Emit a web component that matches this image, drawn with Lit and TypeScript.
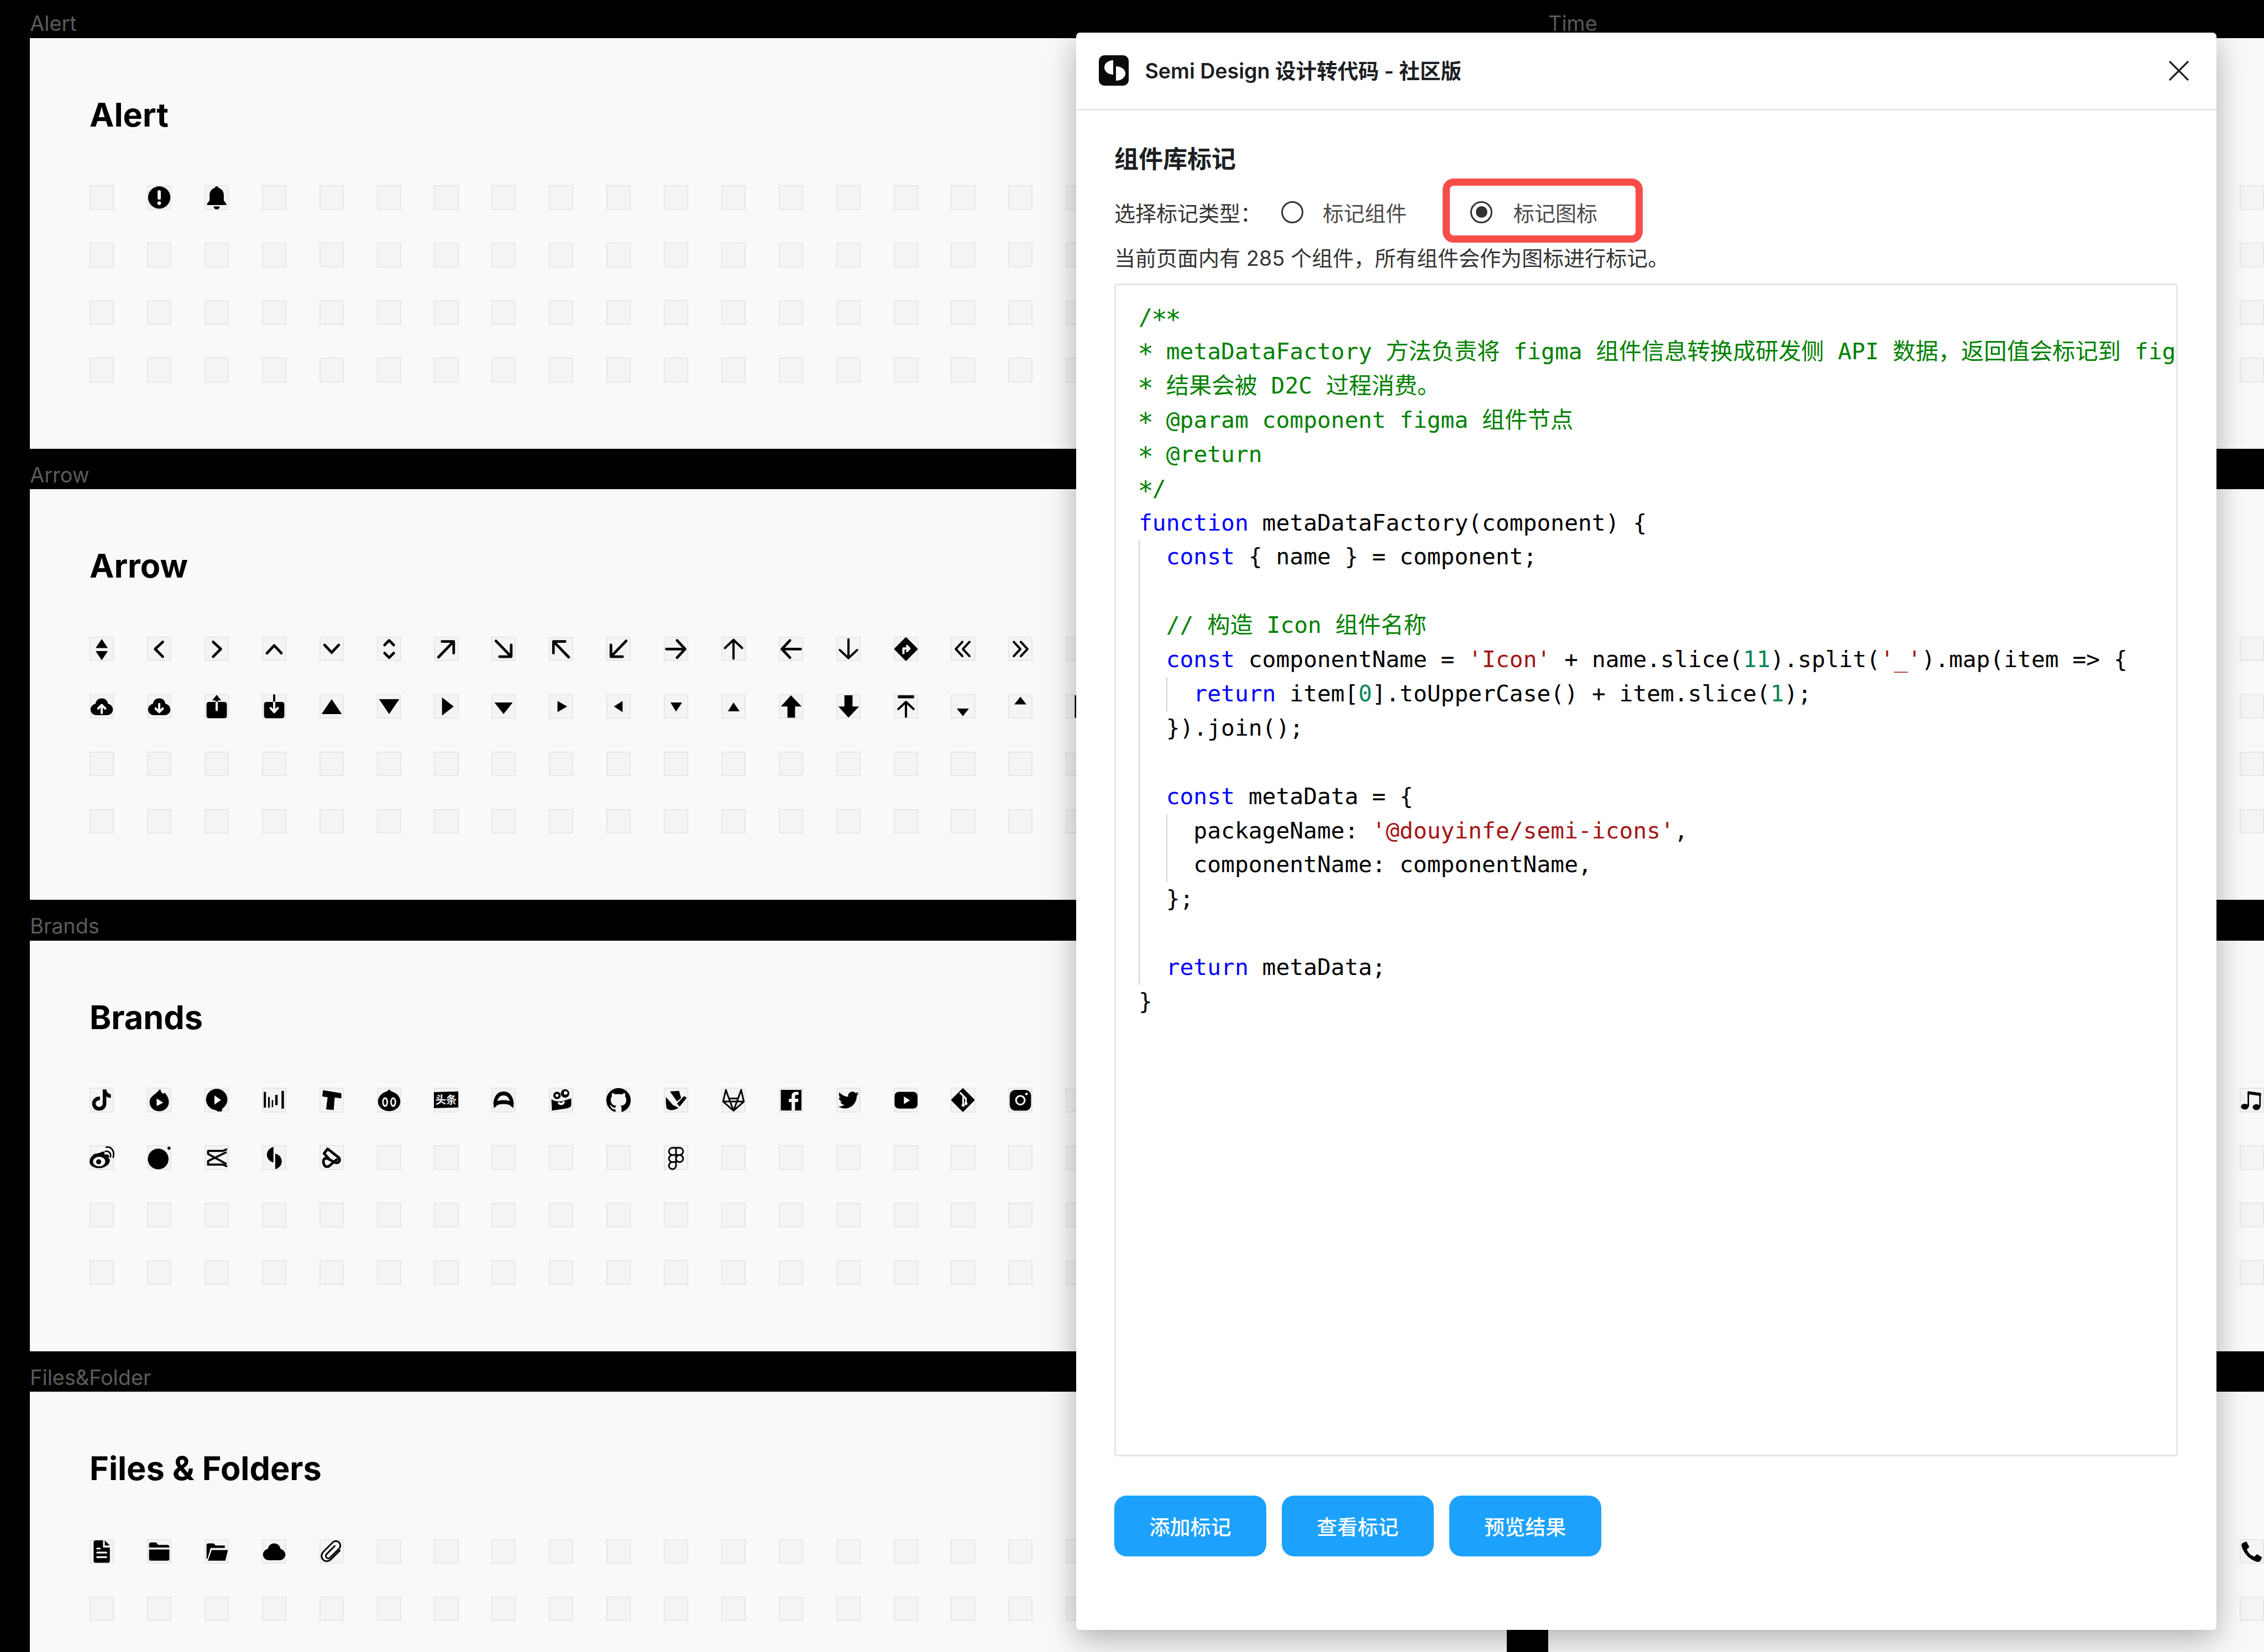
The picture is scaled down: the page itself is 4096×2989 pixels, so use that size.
import { LitElement, html, css, svg } from "lit";
import { customElement } from "lit/decorators.js";

const CLOUD = "M12 4C8.7 4 6.2 6.3 5.8 9.4 3 9.9 1 12.3 1 15c0 3.2 2.6 5.5 5.5 5.5h11c2.9 0 5.5-2.3 5.5-5.5 0-2.7-2-5.1-4.8-5.6C17.8 6.3 15.3 4 12 4Z";
const s = (d: string, c = "l") => svg`<path class=${c} d=${d}></path>`;

const ICONS: Record<string, unknown> = {
  alert: svg`<circle cx="12" cy="12" r="11"></circle><rect class="w" x="10.4" y="4.8" width="3.2" height="9.4" rx="1.6"></rect><circle class="w" cx="12" cy="17.6" r="1.8"></circle>`,
  bell: svg`<path d="M12 1c-.9 0-1.6.7-1.7 1.5C7 3.4 5 6.3 5 9.5V15l-2.5 3.2c-.4.6 0 1.3.7 1.3h17.6c.7 0 1.1-.7.7-1.3L19 15V9.5c0-3.2-2-6.1-5.3-7C13.6 1.7 12.9 1 12 1Z"></path><path d="M9 20.8h6a3 3 0 0 1-6 0Z"></path>`,
  sort: s("M12 2 18 11H6ZM6 14H18L12 23Z", ""),
  cl: s("M15.5 5 8 12l7.5 7.5"),
  cr: s("M8.5 5 16 12l-7.5 7.5"),
  cu: s("M5 16l7-7.5 7 7.5"),
  cd: s("M5 8l7 7.5L19 8"),
  ud: s("M7.5 8 12 3.5 16.5 8M7.5 16l4.5 4.5 4.5-4.5"),
  aur: s("M8 4.5h11.5V16M19 5 4.5 20"),
  adr: s("M4.5 4 19 19M19.5 8v11.5H8"),
  aul: s("M4.5 16V4.5H16M5 5l14.5 15"),
  adl: s("M19.5 4 5 19M4.5 8v11.5H16"),
  ar: s("M2.5 12H21M13 3.5 21 12l-8 8.5"),
  au: svg`<path class="t" d="M12 21.5V3M3.5 11 12 3l8.5 8"></path>`,
  al: s("M21.5 12H3M11 3.5 3 12l8 8.5"),
  ad: svg`<path class="t" d="M12 2.5V21M3.5 13l8.5 8 8.5-8"></path>`,
  route: svg`<path class="r" d="M12 1.5 22.5 12 12 22.5 1.5 12Z"></path><path class="wl" d="M9.5 16v-4.5H15M13 9l2.5 2.5L13 14"></path>`,
  dl: s("M11.5 5 5 12l6.5 7M18.5 5 12 12l6.5 7", "t"),
  dr: s("M5.5 5 12 12l-6.5 7M12.5 5 19 12l-6.5 7", "t"),
  cup: svg`<path d=${CLOUD}></path><path class="wl" d="M12 18.5V11M8.5 14 12 10.5l3.5 3.5"></path>`,
  cdown: svg`<path d=${CLOUD}></path><path class="wl" d="M12 9.5V17M8.5 14l3.5 3.5 3.5-3.5"></path>`,
  bup: svg`<rect x="2" y="7.5" width="20" height="16" rx="2.4"></rect><path d="M12 .5 16.5 6h-3.3v2h-2.4V6H7.5Z"></path><path class="wl" d="M12 15.5V8"></path>`,
  bdown: svg`<rect x="2" y="7.5" width="20" height="16" rx="2.4"></rect><path class="t" d="M12 1v7"></path><path class="wl" d="M12 8v9M8.5 13.5l3.5 4 3.5-4"></path>`,
  t1: s("M12 4.7 22 19.5H2Z", ""),
  t2: s("M2 4.7H22L12 19.5Z", ""),
  t3: s("M8 3 19.5 12 8 21Z", ""),
  t4: s("M3 8H21L12 19.5Z", ""),
  t5: s("M8.5 6.5 18 12 8.5 17.5Z", ""),
  t6: s("M16 6.5 7.5 12 16 17.5Z", ""),
  t7: s("M6.5 8H18L12 17Z", ""),
  t8: s("M12 8 18 16.7H6.5Z", ""),
  fu: s("M12 1 22.5 12H16V23H8.5V12H2Z", ""),
  fd: s("M8 1H16V12H22.5L12 23 2 12H8Z", ""),
  top: svg`<rect x="4" y="1" width="16" height="3" rx=".8"></rect><path class="t" d="M12 22V7.5M4.5 14.5l7.5-7 7.5 7"></path>`,
  t9: s("M6 14H18L12 21.5Z", ""),
  t10: s("M12 2.3 18 10H6Z", ""),
  bar: svg`<rect x="8.9" y="1" width="8" height="22"></rect>`,
  tiktok: s("M13 1.5h3.5c.3 2.6 1.9 4.4 4.5 4.8v3.6c-1.7 0-3.2-.5-4.5-1.4v7c0 4-3 7-7 7s-7-3-7-7c0-3.9 3.2-7.2 7.8-6.9v3.7c-2.3-.4-4.2 1.1-4.2 3.2 0 1.8 1.5 3.3 3.4 3.3s3.5-1.5 3.5-3.6Z", ""),
  flame: svg`<path d="M13 1c.5 3 1.5 4 3 5 .5-.5.8-1 1-1.500 3 3 4.500 6 4.500 9.500 0 5-4 9-9.500 9s-9.500-4-9.500-9c0-5 4.500-7 6.500-9C10.500 3.700 12 2.500 13 1Z"></path><path class="w" d="M9.500 10.500 16 14.500 9.500 18Z"></path>`,
  xigua: svg`<circle cx="12" cy="11.500" r="10.500"></circle><path d="M6 18 13 23.300h4L18 18Z"></path><path class="w" d="M9.800 7.500 16.300 12 9.800 16.500Z"></path>`,
  bars: svg`<rect x="1.700" y="4" width="2.200" height="15.500"></rect><rect x="6" y="9" width="1.700" height="10.500"></rect><rect x="9.600" y="12" width="1.400" height="7"></rect><rect x="13" y="7" width="2.400" height="10"></rect><rect x="19.200" y="3" width="2.400" height="17.500"></rect>`,
  tt: s("M3.500 2.300 21.500 5.300v5l-6.500-.8-1 12.300-7.500-.6 1.500-12L2.700 8.500Z", ""),
  eyes: svg`<path d="M12 1.500c.8 1 2 1.900 3.500 2.500C19.800 5.500 23 9 23 13.500c0 5.500-5 9.500-11 9.500S1 19 1 13.500C1 9 4.200 5.500 8.500 4 10 3.400 11.200 2.500 12 1.500Z"></path><ellipse class="w" cx="8" cy="14" rx="2.900" ry="4.800"></ellipse><ellipse class="w" cx="16" cy="14" rx="2.900" ry="4.800"></ellipse><ellipse cx="8" cy="14" rx="1.400" ry="3"></ellipse><ellipse cx="16" cy="14" rx="1.400" ry="3"></ellipse>`,
  toutiao: svg`<path d="M0 4.200 24 3.500V19.300L0 20Z"></path><text class="tx" x="12" y="15.800" text-anchor="middle">头条</text>`,
  arc: svg`<path d="M12 3.500C6 3.500 2.500 8.500 2 15l.5 5L6 17c2.500-1.500 9.500-1.500 12 0l3.500 3 .5-5c-.5-6.500-4-11.500-10-11.500Z"></path><path class="w" d="M12 7.500c-3.500 0-5.500 2.500-6 5.500 3-1.200 9-1.200 12 0-.5-3-2.500-5.500-6-5.500Z"></path>`,
  camera: svg`<path d="M2.500 11C5 13 9 14 13 13c3-.5 7-2 9-2.500V17c0 2-3 3-6 3.500L3 22.500Z"></path><circle cx="8" cy="7.500" r="3.700"></circle><circle cx="16" cy="5.500" r="4.200"></circle><circle class="w" cx="8" cy="7.500" r="1.500"></circle><circle class="w" cx="16.500" cy="5" r="1.800"></circle><path class="wl" d="M10 15c1.500 1.500 4 1 4.500-1"></path>`,
  github: s("M12 .297c-6.63 0-12 5.373-12 12 0 5.303 3.438 9.8 8.205 11.385.6.113.82-.258.82-.577 0-.285-.01-1.04-.015-2.04-3.338.724-4.042-1.61-4.042-1.61C4.422 18.070 3.633 17.700 3.633 17.700c-1.087-.744.084-.729.084-.729 1.205.084 1.838 1.236 1.838 1.236 1.070 1.835 2.809 1.305 3.495.998.108-.776.417-1.305.76-1.605-2.665-.3-5.466-1.332-5.466-5.930 0-1.310.465-2.380 1.235-3.220-.135-.303-.54-1.523.105-3.176 0 0 1.005-.322 3.300 1.230.96-.267 1.980-.399 3-.405 1.020.006 2.040.138 3 .405 2.280-1.552 3.285-1.230 3.285-1.230.645 1.653.24 2.873.12 3.176.765.84 1.230 1.910 1.230 3.220 0 4.610-2.805 5.625-5.475 5.920.42.36.81 1.096.81 2.220 0 1.606-.015 2.896-.015 3.286 0 .315.21.69.825.57C20.565 22.092 24 17.592 24 12.297c0-6.627-5.373-12-12-12", ""),
  dove: svg`<path d="M6 3.500 15 3l2 7-4 3.500Z"></path><path d="M20 8l2.500 2L15.500 18.500 13 15.500Z"></path><path d="M2 9l7 8 5.500 2.500C11 22.500 6 22.500 3 20.500 2 18 2 12 2 9Z"></path>`,
  gitlab: s("M12 22.500 1.800 13.500 4.500 2l3 8.500h9l3-8.500 2.700 11.500ZM7.500 10.500 12 22.500l4.500-12M1.800 13.500H22.200", "n"),
  fb: svg`<rect x="2" y="2" width="20.300" height="20.300"></rect><path class="w" d="M16 22.300V14h2.800l.5-3.300H16V8.600c0-1 .3-1.600 1.600-1.600h1.800V4c-.4 0-1.400-.1-2.600-.1-2.500 0-4.200 1.500-4.200 4.300v2.500H9.800V14h2.800v8.300Z"></path>`,
  tw: svg`<g transform="translate(1.800 1.800) scale(.85)"><path d="M23.953 4.570a10 10 0 0 1-2.825.775 4.958 4.958 0 0 0 2.163-2.723c-.951.555-2.005.959-3.127 1.184a4.920 4.920 0 0 0-8.384 4.482C7.690 8.095 4.067 6.130 1.640 3.162a4.822 4.822 0 0 0-.666 2.475c0 1.710.87 3.213 2.188 4.096a4.904 4.904 0 0 1-2.228-.616v.06a4.923 4.923 0 0 0 3.946 4.827 4.996 4.996 0 0 1-2.212.085 4.936 4.936 0 0 0 4.604 3.417 9.867 9.867 0 0 1-6.102 2.105c-.39 0-.779-.023-1.170-.067a13.995 13.995 0 0 0 7.557 2.209c9.053 0 13.998-7.496 13.998-13.985 0-.21 0-.42-.015-.63A9.935 9.935 0 0 0 24 4.590z"></path></g>`,
  yt: svg`<rect x=".8" y="4" width="22.600" height="16.400" rx="4"></rect><path class="w" d="M10 8.500 16 12.200 10 16Z"></path>`,
  git: svg`<path class="r" d="M12 1.500 22.500 12 12 22.500 1.500 12Z"></path><path class="wl1" d="M9.500 5l5.500 5.500V16M12.300 8v9.500"></path><circle class="w" cx="12.300" cy="17.200" r="1.500"></circle><circle class="w" cx="15" cy="15.500" r="1.500"></circle>`,
  ig: svg`<rect x="1.500" y="2" width="21" height="20.500" rx="5.500"></rect><circle class="wl1" cx="12" cy="12.200" r="4.300"></circle><circle class="w" cx="18" cy="6" r="1.300"></circle>`,
  weibo: svg`<path d="M10 7.500c2-1.500 3.800-1.800 4.500-1 .5.600.3 1.700-.2 2.800 2.300-.8 4.200-.5 4.700.8.300.8 0 1.700-.5 2.400 1 .5 1.500 1.200 1.500 2.500 0 3.500-4.500 7.500-10.500 7.500C4.500 22.500 0 20 0 16c0-2.500 2-5.500 5-7.500Z"></path><ellipse class="w" cx="9.500" cy="16" rx="6" ry="4.700"></ellipse><circle cx="9" cy="16.200" r="2.500"></circle><path class="l1" d="M15.500 6c3.500-1 6 2 5 5.500M16.500 1.800c5-.8 8.500 4 6.800 10"></path>`,
  orb: svg`<circle cx="11" cy="13.500" r="10.200"></circle><circle cx="21.600" cy="2.800" r="1.500"></circle>`,
  capcut: s("M3.500 5.500H18l3.500-1.500M3.500 5.500v3L21 18M21 7 3.500 15.500V19H18l3.500 1.500", "l2"),
  semi: svg`<path d="M11.300 1.500A8.600 8 0 0 0 11.300 17Z"></path><path d="M13 8A8.600 8 0 0 1 13 23.500Z"></path>`,
  loop: s("M8 3.500 19 12c2 3 0 6-3.500 5L8 13c-4-1-5 2-3.500 6 1 2.500 4 2.500 5.500 1l7-6M8 3.500 4.500 8l4.500 5", "l"),
  figma: s("M12 2.500H8.500a3.500 3.500 0 0 0 0 7H12ZM12 2.500h3.500a3.500 3.500 0 0 1 0 7H12ZM12 9.500H8.500a3.500 3.500 0 0 0 0 7H12ZM19 13a3.500 3.500 0 1 1-7 0 3.500 3.500 0 1 1 7 0ZM12 16.500H8.500A3.500 3.500 0 1 0 12 20Z", "n"),
  music: svg`<path class="l1" d="M8.500 18V4.500L20 6v12"></path><path d="M8 3.200 21 5v3L8 6.200Z"></path><ellipse cx="5" cy="18.500" rx="3.700" ry="2.900"></ellipse><ellipse cx="16.500" cy="19" rx="3.700" ry="2.900"></ellipse>`,
  phone: s("M6.600 2 3 3.500C2 4 1.500 5.500 2 7c2 7 8 13 15 15 1.500.5 3 0 3.500-1l1.500-3.500-5-3-2.500 2.500C11 16 8.500 13.500 7 10l2.500-2.500Z", ""),
  doc: svg`<path d="M4 3a2 2 0 0 1 2-2h7.300v7H20v13a2 2 0 0 1-2 2H6a2 2 0 0 1-2-2Z"></path><path d="M15 1l5 5h-5Z"></path><path class="wl1" d="M7.500 9H10M7.500 13H16.500M7.500 17.500H16.500"></path>`,
  folder: svg`<path d="M2 5a2 2 0 0 1 2-2h5l2 2.500h9a2 2 0 0 1 2 2V8H2Z"></path><path d="M2 10h20v9a2 2 0 0 1-2 2H4a2 2 0 0 1-2-2Z"></path>`,
  open: svg`<path d="M2 6a2 2 0 0 1 2-2h5l2 2h9v2.500H6L3 19H2Z"></path><path d="M7 10.500h16L20.500 21h-17Z"></path>`,
  cloud: s(CLOUD, ""),
  clip: s("M20 11l-8.500 8.500C9 22 5.500 22 3.500 20s-2-5.500.5-8l9-9c1.800-1.800 4.500-1.800 6.300 0 1.700 1.800 1.700 4.500 0 6.200L10.500 18c-1 1-2.500 1-3.500 0s-1-2.500 0-3.500l8-8", "n"),
};

type Rows = Record<number, string>;
interface Section { label?: string; title?: string; icons?: Rows; }

const ARROW: Rows = {
  0: "sort", 1: "cl", 2: "cr", 3: "cu", 4: "cd", 5: "ud", 6: "aur", 7: "adr", 8: "aul", 9: "adl", 10: "ar", 11: "au", 12: "al", 13: "ad", 14: "route", 15: "dl", 16: "dr",
  24: "cup", 25: "cdown", 26: "bup", 27: "bdown", 28: "t1", 29: "t2", 30: "t3", 31: "t4", 32: "t5", 33: "t6", 34: "t7", 35: "t8", 36: "fu", 37: "fd", 38: "top", 39: "t9", 40: "t10", 41: "bar",
};
const BRANDS: Rows = {
  0: "tiktok", 1: "flame", 2: "xigua", 3: "bars", 4: "tt", 5: "eyes", 6: "toutiao", 7: "arc", 8: "camera", 9: "github", 10: "dove", 11: "gitlab", 12: "fb", 13: "tw", 14: "yt", 15: "git", 16: "ig",
  24: "weibo", 25: "orb", 26: "capcut", 27: "semi", 28: "loop", 34: "figma",
};

const LEFT: Section[] = [
  { label: "Alert", title: "Alert", icons: { 1: "alert", 2: "bell" } },
  { label: "Arrow", title: "Arrow", icons: ARROW },
  { label: "Brands", title: "Brands", icons: BRANDS },
  { label: "Files&Folder", title: "Files & Folders", icons: { 0: "doc", 1: "folder", 2: "open", 3: "cloud", 4: "clip" } },
];
const RIGHT: Section[] = [
  { label: "Time" },
  {},
  { icons: { 11: "music" } },
  { icons: { 11: "phone" } },
];

type Tok = [string, string];
const c = (t: string): Tok => ["cm", t];
const a = (): Tok => ["cm ast", "*"];
const k = (t: string): Tok => ["kw", t];
const p = (t: string): Tok => ["", t];
const q = (t: string): Tok => ["st", t];
const n = (t: string): Tok => ["nu", t];

const CODE: [number, Tok[]][] = [
  [0, [c("/"), a(), a()]],
  [0, [a(), c(" metaDataFactory 方法负责将 figma 组件信息转换成研发侧 API 数据，返回值会标记到 fig")]],
  [0, [a(), c(" 结果会被 D2C 过程消费。")]],
  [0, [a(), c(" @param component figma 组件节点")]],
  [0, [a(), c(" @return")]],
  [0, [a(), c("/")]],
  [0, [k("function"), p(" metaDataFactory(component) {")]],
  [1, [k("const"), p(" { name } = component;")]],
  [1, []],
  [1, [c("// 构造 Icon 组件名称")]],
  [1, [k("const"), p(" componentName = "), q("'Icon'"), p(" + name.slice("), n("11"), p(").split("), q("'_'"), p(").map(item => {")]],
  [2, [k("return"), p(" item["), n("0"), p("].toUpperCase() + item.slice("), n("1"), p(");")]],
  [1, [p("}).join();")]],
  [1, []],
  [1, [k("const"), p(" metaData = {")]],
  [2, [p("packageName: "), q("'@douyinfe/semi-icons'"), p(",")]],
  [2, [p("componentName: componentName,")]],
  [1, [p("};")]],
  [1, []],
  [1, [k("return"), p(" metaData;")]],
  [0, [p("}")]],
];

@customElement("app-root")
export class AppRoot extends LitElement {
  static styles = css`
    :host {
      display: block;
      position: relative;
      width: 4096px;
      height: 2989px;
      overflow: hidden;
      background: #000;
      font-family: Inter, "Noto Sans CJK SC", sans-serif;
    }
    .page {
      display: flex;
      gap: 74.800px;
      padding-left: 54.200px;
      margin-top: -4.700px;
    }
    .col {
      flex: 0 0 2672px;
      display: flex;
      flex-direction: column;
    }
    .label {
      height: 73.500px;
      box-sizing: border-box;
      padding-top: 25px;
      font-size: 37.800px;
      line-height: 44px;
      color: #5c5c5c;
      white-space: nowrap;
    }
    .panel {
      height: 743px;
      box-sizing: border-box;
      background: #f8f9fb;
      padding: 98px 0 0 107.900px;
    }
    .title {
      height: 80px;
      font-size: 59.400px;
      line-height: 80px;
      font-weight: 700;
      color: #000;
      margin: 0 0 88.400px;
    }
    .grid {
      display: grid;
      grid-template-columns: repeat(24, 44.100px);
      grid-auto-rows: 44.600px;
      column-gap: 59.800px;
      row-gap: 59.400px;
    }
    .cell {
      box-sizing: border-box;
      background: #f4f4f6;
      border: 2px solid #e6e7ea;
      position: relative;
    }
    .cell svg {
      position: absolute;
      left: -2px;
      top: -2px;
      width: 44.100px;
      height: 44.600px;
      display: block;
      overflow: visible;
    }
    .cell svg path, .cell svg circle, .cell svg rect, .cell svg ellipse { fill: #000; }
    .cell svg .w { fill: #f6f6f7; }
    .cell svg .l, .cell svg .t, .cell svg .n, .cell svg .l1, .cell svg .l2 {
      fill: none; stroke: #000; stroke-linecap: round; stroke-linejoin: round;
    }
    .cell svg .l { stroke-width: 2.600; }
    .cell svg .t { stroke-width: 2.200; }
    .cell svg .n { stroke-width: 1.600; }
    .cell svg .l1 { stroke-width: 1.500; }
    .cell svg .l2 { stroke-width: 2; }
    .cell svg .r { stroke: #000; stroke-width: 2; stroke-linejoin: round; }
    .cell svg .wl, .cell svg .wl1 {
      fill: none; stroke: #f6f6f7; stroke-linecap: round; stroke-linejoin: round;
    }
    .cell svg .wl { stroke-width: 2.200; }
    .cell svg .wl1 { stroke-width: 1.700; }
    .tx {
      fill: #f6f6f7;
      font-family: "Noto Sans CJK SC", sans-serif;
      font-size: 10.500px;
      font-weight: 700;
    }

    .modal {
      position: absolute;
      left: 1947.400px;
      top: 58.500px;
      width: 2062.600px;
      height: 2890.500px;
      background: #fff;
      border-radius: 7px;
      box-shadow: 0 16px 55px rgba(0, 0, 0, 0.3);
      display: flex;
      flex-direction: column;
    }
    .head {
      flex: 0 0 141px;
      box-sizing: border-box;
      display: flex;
      align-items: center;
      padding: 0 49px 0 41px;
      border-bottom: 3px solid #e6e6e6;
    }
    .logo { width: 54px; height: 55px; display: block; margin-right: 29px; }
    .mtitle {
      flex: 1;
      font-size: 37.600px;
      font-weight: 600;
      color: #1c1f23;
      white-space: nowrap;
      padding-bottom: 5px;
    }
    .close { width: 38px; height: 38px; display: block; }
    .body {
      flex: 1;
      display: flex;
      flex-direction: column;
      padding: 58px 70px 0 68.600px;
    }
    .h {
      margin: 0;
      font-size: 44px;
      line-height: 60px;
      font-weight: 600;
      color: #1c1f23;
    }
    .row {
      display: flex;
      align-items: center;
      height: 60px;
      margin-top: 36.300px;
      font-size: 38px;
      color: #333;
      white-space: nowrap;
    }
    .radio {
      box-sizing: border-box;
      width: 40px;
      height: 40px;
      border: 3px solid #333;
      border-radius: 50%;
      margin: 0 35px 0 36px;
      display: flex;
      align-items: center;
      justify-content: center;
      flex: none;
    }
    .radio + span { color: #4c4c4c; width: 150px; }
    .radio.second { margin: 0 38px 0 117px; }
    .dot { width: 21px; height: 21px; border-radius: 50%; background: #333; }
    .mark {
      position: absolute;
      left: 663px;
      top: 264.800px;
      width: 361.200px;
      height: 116px;
      box-sizing: border-box;
      border: 13px solid #f64d4b;
      border-radius: 20px;
    }
    .desc {
      font-size: 38px;
      line-height: 60px;
      height: 60px;
      margin-top: 23.400px;
      color: #333;
      white-space: nowrap;
    }
    .editor {
      box-sizing: border-box;
      margin-top: 16px;
      height: 2122px;
      border: 3px solid #e6e6e6;
      border-radius: 5px;
      padding: 28px 0 0 41px;
      overflow: hidden;
      font-family: "DejaVu Sans Mono", "Noto Sans CJK SC", monospace;
      font-size: 41.270px;
      color: #000;
    }
    .line {
      display: flex;
      height: 61.900px;
      line-height: 61.900px;
      white-space: pre;
    }
    .ind {
      flex: 0 0 2ch;
      box-sizing: border-box;
      border-left: 2px solid #d3d3d3;
    }
    .cm { color: #008000; }
    .kw { color: #0000ff; }
    .st { color: #a31515; }
    .nu { color: #098658; }
    .ast { display: inline-block; transform: translateY(5px) scale(1.15); }
    .btns {
      display: flex;
      gap: 27.600px;
      margin-top: 70.600px;
    }
    .btn {
      width: 275.200px;
      height: 110px;
      border: 0;
      padding: 0;
      border-radius: 22px;
      background: #1ca2fd;
      color: #fff;
      font: 500 37px Inter, "Noto Sans CJK SC", sans-serif;
    }
  `;

  private cell(name?: string) {
    return html`<div class="cell">${name ? html`<svg viewBox="0 0 24 24">${ICONS[name]}</svg>` : ""}</div>`;
  }

  private section(sec: Section) {
    const cells = [];
    for (let i = 0; i < 96; i++) cells.push(this.cell(sec.icons?.[i]));
    return html`
      <div class="label">${sec.label ?? ""}</div>
      <section class="panel">
        <h3 class="title">${sec.title ?? ""}</h3>
        <div class="grid">${cells}</div>
      </section>
    `;
  }

  render() {
    return html`
      <div class="page">
        <div class="col">${LEFT.map((x) => this.section(x))}</div>
        <div class="col">${RIGHT.map((x) => this.section(x))}</div>
      </div>
      <div class="modal">
        <header class="head">
          <svg class="logo" viewBox="0 0 54 55">
            <rect width="54" height="55" rx="10" fill="#0b0b0b"></rect>
            <path d="M26 9A16 13 0 0 0 26 35Z" fill="#fff"></path>
            <path d="M31 20A17 13 0 0 1 31 46Z" fill="#fff"></path>
          </svg>
          <div class="mtitle">Semi Design 设计转代码 - 社区版</div>
          <svg class="close" viewBox="0 0 38 38">
            <path d="M2 2 36 36M36 2 2 36" stroke="#222" stroke-width="3.200" fill="none"></path>
          </svg>
        </header>
        <div class="body">
          <h2 class="h">组件库标记</h2>
          <div class="row">
            <span>选择标记类型：</span>
            <i class="radio"></i><span>标记组件</span>
            <i class="radio second"><b class="dot"></b></i><span>标记图标</span>
          </div>
          <div class="desc">当前页面内有 285 个组件，所有组件会作为图标进行标记。</div>
          <div class="editor">
            ${CODE.map(
              ([lvl, toks]) => html`<div class="line">${Array.from({ length: lvl }, () => html`<span class="ind"></span>`)}<span>${toks.map(([cl, t]) => html`<span class=${cl}>${t}</span>`)}</span></div>`
            )}
          </div>
          <div class="btns">
            <button class="btn">添加标记</button>
            <button class="btn">查看标记</button>
            <button class="btn">预览结果</button>
          </div>
        </div>
        <div class="mark"></div>
      </div>
    `;
  }
}
